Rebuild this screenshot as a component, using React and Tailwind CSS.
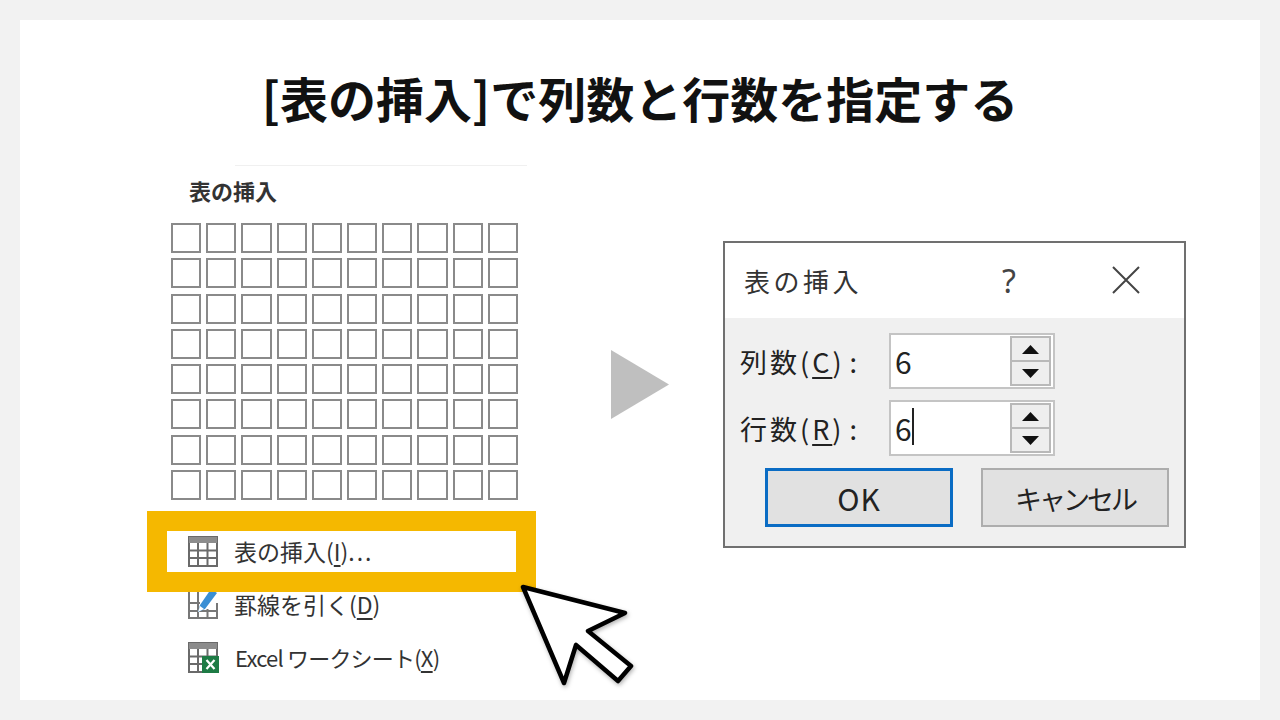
const jp = { fontFamily: '"Noto Sans CJK JP", "Noto Sans", sans-serif' };

function TableIcon() {
  return (
    <svg width="30" height="31" viewBox="0 0 30 31" className="shrink-0">
      <rect x="1" y="1" width="28" height="29" fill="#fff" stroke="#6a6a6a" strokeWidth="2" />
      <rect x="1" y="1" width="28" height="6" fill="#8c8c8c" />
      <path d="M1 14.5H29M1 22H29M10 7V30M19.500 7V30" stroke="#6a6a6a" strokeWidth="2" fill="none" />
    </svg>
  );
}

function DrawIcon() {
  return (
    <svg width="30" height="31" viewBox="0 0 30 31" className="shrink-0">
      <path d="M1 0V29H29V14M1 14H12M1 22H29M10 0V29M19.500 20V29" stroke="#777" strokeWidth="2" fill="none" />
      <path d="M23 0L29 4L17 20L10 23L12 16Z" fill="#3b8fd4" />
      <path d="M10 23L12 17L16 20Z" fill="#fff" />
    </svg>
  );
}

function ExcelIcon() {
  return (
    <svg width="31" height="31" viewBox="0 0 31 31" className="shrink-0">
      <rect x="1" y="1" width="28" height="29" fill="#fff" stroke="#6a6a6a" strokeWidth="2" />
      <rect x="1" y="1" width="28" height="6" fill="#8c8c8c" />
      <path d="M1 14.500H29M1 22H29M10 7V30M19.500 7V30" stroke="#6a6a6a" strokeWidth="2" fill="none" />
      <rect x="14" y="14" width="17" height="17" fill="#1e7b45" />
      <path d="M18.500 18L26.500 27M26.500 18L18.500 27" stroke="#fff" strokeWidth="2.200" />
    </svg>
  );
}

function MenuRow({ icon, children }) {
  return (
    <div className="flex h-[53px] items-center gap-[16px] pl-[41px] text-[#333]">
      {icon}
      {children}
    </div>
  );
}

function Spin({ value, caret }) {
  return (
    <div className="flex h-[56px] w-[166px] items-center border-2 border-[#c4c4c4] bg-white">
      <div className="relative flex-1 pl-[4px] text-[30px] leading-none text-[#222]">
        {value}
        {caret && <span className="absolute left-[21px] top-[-5px] h-[37px] w-[2px] bg-[#222]" />}
      </div>
      <div className="mr-[2px] flex h-[50px] w-[41px] flex-col border-2 border-[#b9b9b9] bg-[#eeeeee]">
        <div className="flex flex-1 items-center justify-center border-b-2 border-[#b9b9b9]">
          <svg width="17" height="9" viewBox="0 0 17 9"><path d="M8.500 0L17 9H0Z" fill="#111" /></svg>
        </div>
        <div className="flex flex-1 items-center justify-center">
          <svg width="17" height="9" viewBox="0 0 17 9"><path d="M0 0H17L8.500 9Z" fill="#111" /></svg>
        </div>
      </div>
    </div>
  );
}

function Field({ label, letter, value, caret }) {
  return (
    <div className="flex items-center">
      <div className="w-[164px] whitespace-nowrap pl-[15px] text-[27px] leading-none tracking-[3px] text-[#222]">
        {label}(<span className="underline underline-offset-4">{letter}</span>)<span className="ml-[5px]">:</span>
      </div>
      <Spin value={value} caret={caret} />
    </div>
  );
}

export default function App() {
  const cells = Array.from({ length: 80 });

  return (
    <div className="h-[720px] w-[1280px] overflow-hidden bg-[#f2f2f2] p-5" style={jp}>
      <div className="h-[680px] bg-white">
        <div className="flex h-[145px] items-center justify-center pt-[8px]">
          <h1 className="text-[48px] font-bold leading-none text-[#111]">[表の挿入]で列数と行数を指定する</h1>
        </div>

        <div className="flex">
          {/* 左: 表メニュー */}
          <div className="relative ml-[127px] w-[389px] shrink-0">
            <div className="ml-[88px] h-px w-[292px] bg-[#f0f0f0]" />
            <div className="flex h-[57px] items-center pb-[8px] pl-[42px] text-[22px] font-bold text-[#333]">表の挿入</div>
            <div className="ml-[24px] grid w-[347px] grid-cols-10 gap-x-[5px] gap-y-[5.300px]">
              {cells.map((_, i) => (
                <div key={i} className="h-[30px] border-2 border-[#8a8a8a] bg-white" />
              ))}
            </div>

            <div className="relative mt-[25px]">
              <MenuRow icon={<TableIcon />}>
                <span className="whitespace-nowrap text-[23px]">
                  表の挿入(<span className="underline underline-offset-4">I</span>)<span className="tracking-[2px]">...</span>
                </span>
              </MenuRow>
              <MenuRow icon={<DrawIcon />}>
                <span className="whitespace-nowrap text-[23px]">
                  罫線を引く(<span className="underline underline-offset-4">D</span>)
                </span>
              </MenuRow>
              <MenuRow icon={<ExcelIcon />}>
                <span className="whitespace-nowrap text-[22px] tracking-[-0.800px]">
                  Excel ワークシート(<span className="underline underline-offset-4">X</span>)
                </span>
              </MenuRow>
              <div className="absolute -top-[14px] left-0 h-[81px] w-[389px] border-[20px] border-[#f5b800]" />
            </div>

            <svg
              width="130"
              height="115"
              viewBox="0 0 130 115"
              className="absolute left-[368px] top-[415px] drop-shadow-[1px_2px_2px_rgba(0,0,0,0.3)]"
            >
              <path
                d="M8 7L110 33L73 51L116 86L103 101L61 65L49 103Z"
                fill="#fff"
                stroke="#000"
                strokeWidth="4.500"
                strokeLinejoin="round"
              />
            </svg>
          </div>

          {/* 矢印 */}
          <div className="ml-[75px] mt-[185px] h-[69px] w-[58px] shrink-0">
            <svg width="58" height="69" viewBox="0 0 58 69"><path d="M0 0L58 34.500L0 69Z" fill="#bfbfbf" /></svg>
          </div>

          {/* 右: ダイアログ */}
          <div className="ml-[54px] mt-[76px] h-[307px] w-[463px] shrink-0 border-2 border-[#707070] bg-[#f0f0f0]">
            <div className="flex h-[75px] items-center bg-white pl-[19px]">
              <span className="w-[258px] text-[26px] tracking-[3.500px] text-[#333]">表の挿入</span>
              <span className="w-[108px] text-[32px] text-[#444]" style={{ fontFamily: '"Noto Sans", sans-serif' }}>?</span>
              <svg width="28" height="28" viewBox="0 0 28 28" className="mb-[2px] ml-[2px]">
                <path d="M1 1L27 27M27 1L1 27" stroke="#444" strokeWidth="2" />
              </svg>
            </div>
            <div className="flex flex-col gap-[11px] pt-[15px]">
              <Field label="列数" letter="C" value="6" />
              <Field label="行数" letter="R" value="6" caret />
            </div>
            <div className="mt-[12px] flex gap-[28px] pl-[40px]">
              <button className="h-[59px] w-[188px] border-[3px] border-[#0a6cc4] bg-[#e1e1e1] pt-[1px] text-[30px] tracking-[1px] text-[#222]">
                OK
              </button>
              <button className="h-[59px] w-[188px] border-2 border-[#adadad] bg-[#e1e1e1] pt-[3px] text-[27px] tracking-[-3px] text-[#222]">
                キャンセル
              </button>
            </div>
          </div>
        </div>
      </div>
    </div>
  );
}
